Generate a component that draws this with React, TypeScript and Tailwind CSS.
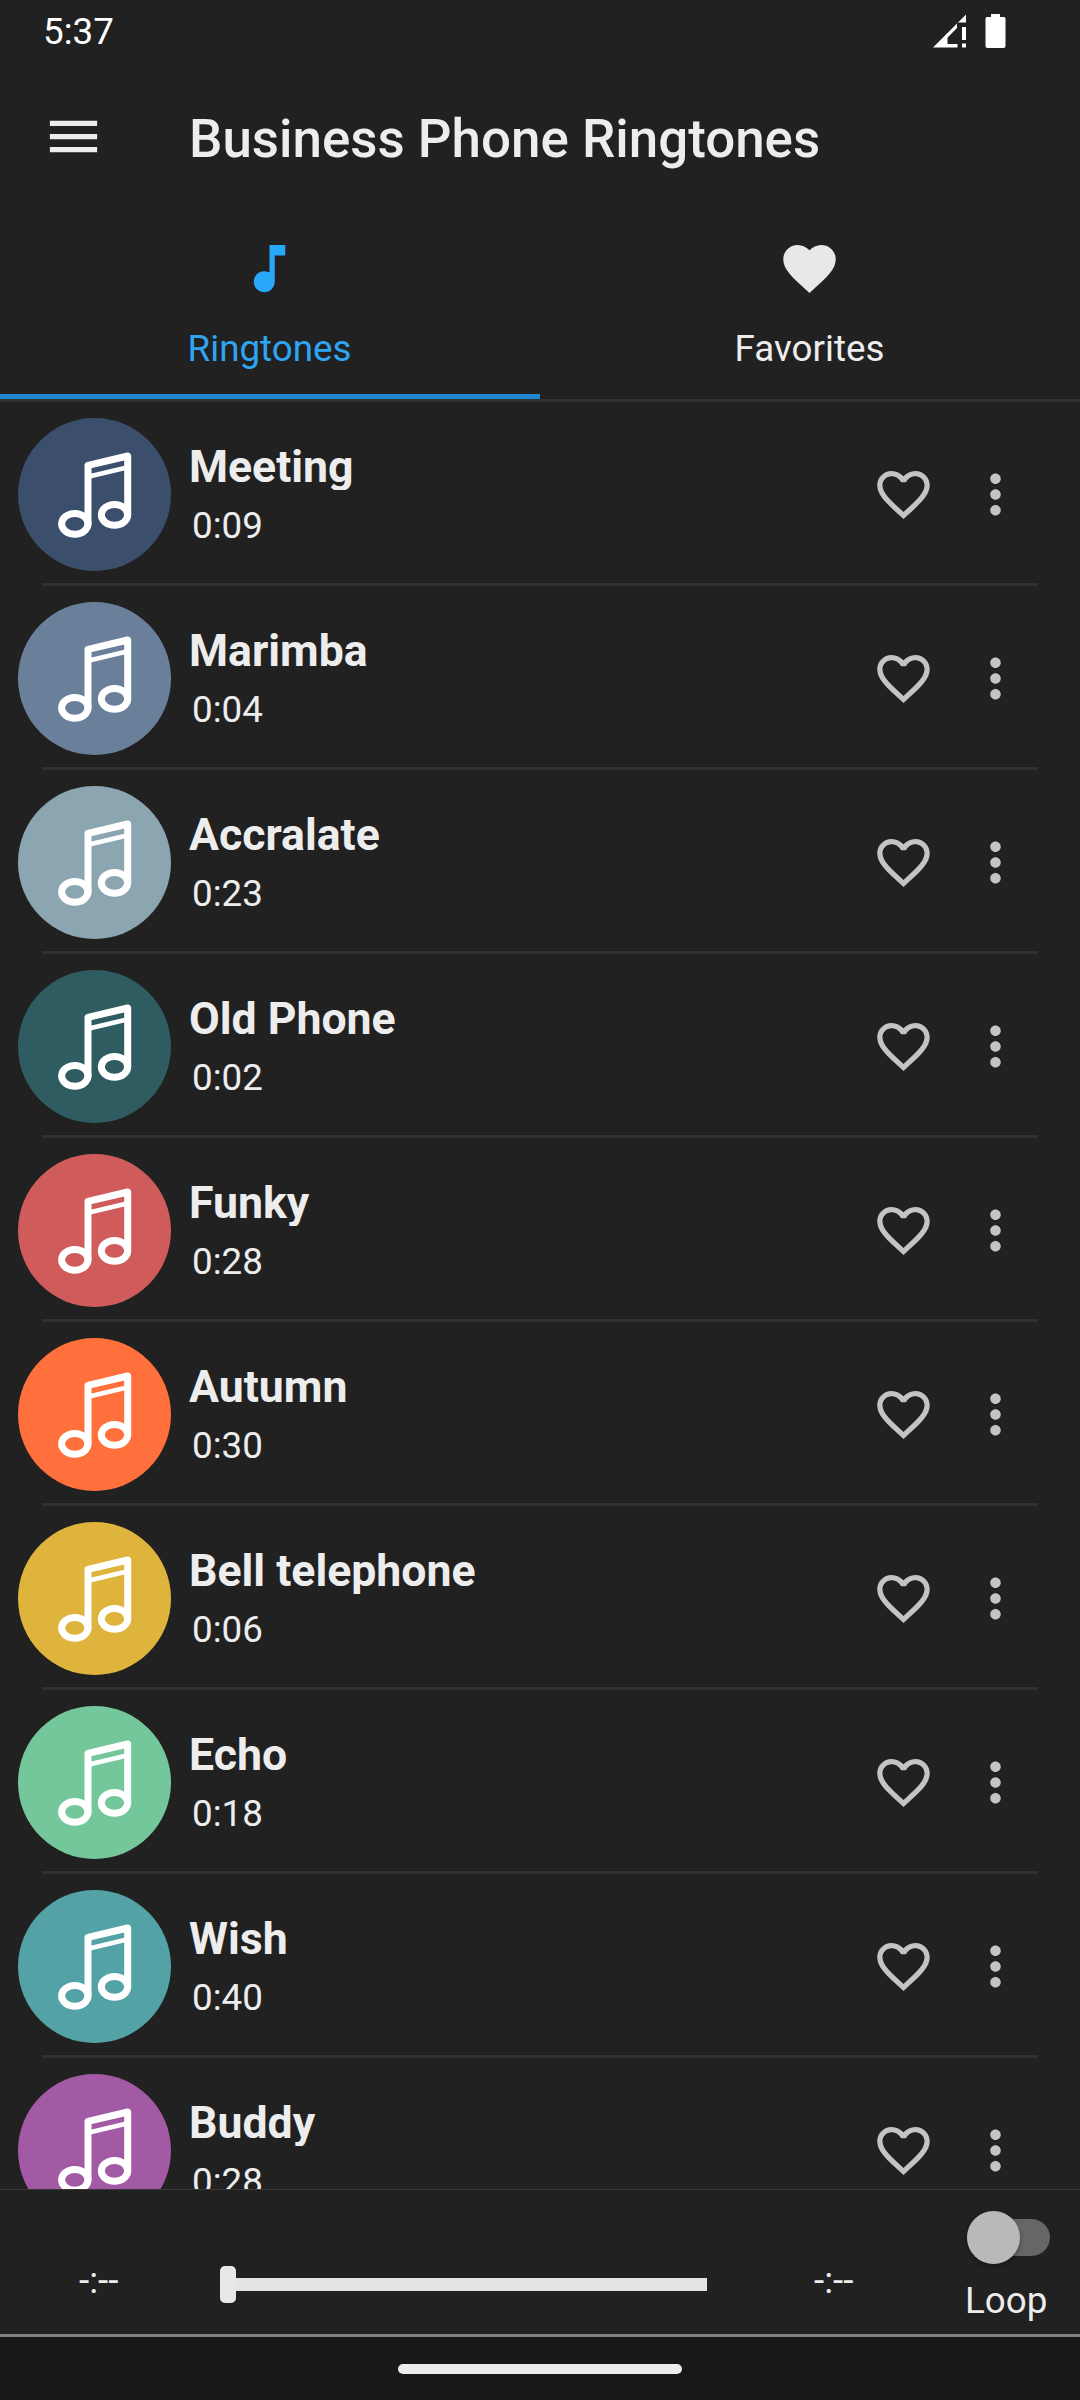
import { MdFavorite, MdFavoriteBorder, MdMenu, MdMoreVert, MdMusicNote } from "react-icons/md";

const ringtones = [
  { name: "Meeting", time: "0:09", color: "bg-[#3b4f6c]" },
  { name: "Marimba", time: "0:04", color: "bg-[#6a7f99]" },
  { name: "Accralate", time: "0:23", color: "bg-[#8ba5b1]" },
  { name: "Old Phone", time: "0:02", color: "bg-[#2f5c61]" },
  { name: "Funky", time: "0:28", color: "bg-[#cf5b5b]" },
  { name: "Autumn", time: "0:30", color: "bg-[#ff703c]" },
  { name: "Bell telephone", time: "0:06", color: "bg-[#dfb43c]" },
  { name: "Echo", time: "0:18", color: "bg-[#74c79b]" },
  { name: "Wish", time: "0:40", color: "bg-[#53a2a6]" },
  { name: "Buddy", time: "0:28", color: "bg-[#a25aa4]" },
];

function NoteGlyph() {
  return (
    <svg viewBox="0 0 153 153" className="size-full" fill="none" stroke="#fff" strokeLinecap="round" strokeLinejoin="round">
      <ellipse cx="56.800" cy="105.800" rx="13.200" ry="10.400" strokeWidth="7" />
      <ellipse cx="96.500" cy="96.800" rx="13.200" ry="10.400" strokeWidth="7" />
      <path d="M70 105.800V47.300L109.700 38V96.800" strokeWidth="7" />
      <path d="M71 58.500L109 49.500" strokeWidth="4.800" />
    </svg>
  );
}

function StatusBar() {
  return (
    <header className="flex h-[62px] items-center justify-between pr-[74px] pl-[43px] text-white">
      <span className="pt-[2px] leading-[62px]">5:37</span>
      <span className="flex items-start gap-[18px]">
        <svg width="34" height="34" viewBox="0 0 34 34" fill="#fff">
          <path d="M0 33.500L24 9.500V14L14.500 23.500V30H24.500V33.500Z" />
          <path d="M24.500 9L33 0.500V8.500H24.500Z" />
          <path d="M29 13H33V26H29ZM29 29.500H33V33.500H29Z" />
        </svg>
        <svg width="21" height="34" viewBox="0 0 21 34" fill="#fff">
          <path d="M6 0h9v3h4a1.800 1.800 0 0 1 1.500 1.800V32a2 2 0 0 1-2 2H2.500a2 2 0 0 1-2-2V4.800A1.800 1.800 0 0 1 2 3h4z" />
        </svg>
      </span>
    </header>
  );
}

function Tabs() {
  return (
    <nav className="grid h-[187px] shrink-0 grid-cols-2 border-b-3 border-[#323232]">
      <div className="flex flex-col items-center border-b-5 border-[#1f88d1] pt-[22px] pr-px text-[#2fa5f2]">
        <MdMusicNote className="size-[63px] text-[#29a7f8]" />
        <span className="mt-[27px] leading-[44px]">Ringtones</span>
      </div>
      <div className="flex flex-col items-center pt-[22px] pr-px">
        <MdFavorite className="size-[63px] text-[#e8e8e8]" />
        <span className="mt-[27px] leading-[44px]">Favorites</span>
      </div>
    </nav>
  );
}

function Row({ name, time, color }: { name: string; time: string; color: string }) {
  return (
    <li className="relative flex h-[184px] shrink-0 items-start pl-[17.5px] after:absolute after:right-[42px] after:bottom-0 after:left-[42px] after:h-[3px] after:bg-[#313131]">
      <div className={`mt-[15.5px] size-[153px] shrink-0 rounded-full ${color}`}>
        <NoteGlyph />
      </div>
      <div className="ml-[18.5px] flex-1 pt-[35px]">
        <div className="h-[53px] overflow-hidden text-[44.6px] leading-[60px] font-bold">{name}</div>
        <div className="mt-[14px] pl-[3px] leading-[44px]">{time}</div>
      </div>
      <MdFavoriteBorder className="mt-[61px] mr-[29px] size-[63px] text-[#c4c4c4]" />
      <MdMoreVert className="mt-[61px] mr-[53px] size-[63px] text-[#c4c4c4]" />
    </li>
  );
}

function Player() {
  return (
    <section className="flex h-[148px] shrink-0 items-start border-t border-b-3 border-t-[#393939] border-b-[#828282]">
      <span className="mt-[69px] ml-[79px] w-[141px] leading-[44px]">-:--</span>
      <div className="mt-[76px] flex h-[37px] w-[487px] items-center">
        <div className="h-full w-4 rounded-[5px] bg-[#e8e8e8]" />
        <div className="h-[13px] flex-1 bg-[#e5e4e2]" />
      </div>
      <span className="mt-[69px] ml-[107px] w-[151px] leading-[44px]">-:--</span>
      <div className="mt-[21px]">
        <div className="ml-[2px] flex h-[53px] w-[83px] items-center">
          <div className="relative flex h-[37px] w-full items-center rounded-full bg-[#666]">
            <div className="size-[53px] shrink-0 rounded-full bg-[#b9b9b9] shadow-[0_2px_4px_rgba(0,0,0,0.35)]" />
          </div>
        </div>
        <div className="mt-[15px] leading-[44px]">Loop</div>
      </div>
    </section>
  );
}

export default function App() {
  return (
    <div className="flex h-[2400px] w-[1080px] flex-col overflow-hidden bg-[#212121] font-[Roboto,sans-serif] text-[36.75px] text-[#ededed]">
      <StatusBar />
      <div className="flex h-[153px] shrink-0 items-center pl-[42px]">
        <MdMenu className="mb-[4px] size-[63px]" />
        <h1 className="ml-[84px] text-[52.9px] leading-[62px] font-medium">Business Phone Ringtones</h1>
      </div>
      <Tabs />
      <ul className="flex min-h-0 flex-1 flex-col overflow-hidden">
        {ringtones.map((r) => (
          <Row key={r.name} {...r} />
        ))}
      </ul>
      <Player />
      <footer className="flex h-[63px] shrink-0 justify-center bg-[#181818] pt-[27px]">
        <div className="h-[10px] w-[284px] rounded-full bg-[#ededed]" />
      </footer>
    </div>
  );
}
